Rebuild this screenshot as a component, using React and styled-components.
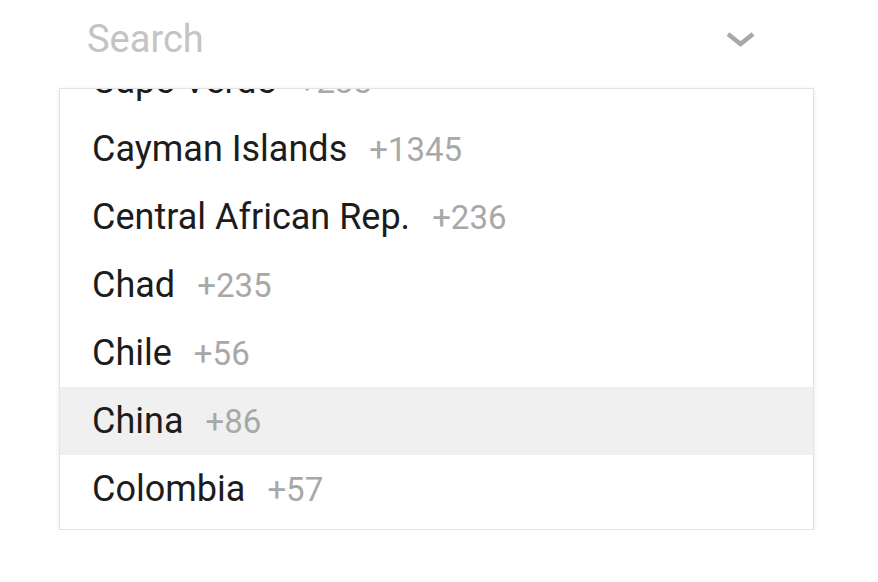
import React, {useLayoutEffect, useRef} from 'react';
import styled, {createGlobalStyle} from 'styled-components';

const GlobalStyle = createGlobalStyle`
  body {
    margin: 0;
    background: #fff;
    font-family: Roboto, "Liberation Sans", Arial, sans-serif;
  }
`;

const countries = [
  {name: 'Cambodia', code: '+855'},
  {name: 'Cameroon', code: '+237'},
  {name: 'Canada', code: '+1'},
  {name: 'Cape Verde', code: '+238'},
  {name: 'Cayman Islands', code: '+1345'},
  {name: 'Central African Rep.', code: '+236'},
  {name: 'Chad', code: '+235'},
  {name: 'Chile', code: '+56'},
  {name: 'China', code: '+86', active: true},
  {name: 'Colombia', code: '+57'},
  {name: 'Comoros', code: '+269'},
  {name: 'Congo', code: '+242'},
];

const Wrapper = styled.div`
  width: 755px;
  margin-left: 59px;
`;

const Field = styled.div`
  display: flex;
  align-items: center;
  justify-content: space-between;
  height: 78px;
  padding: 0 58px 0 28px;
  margin-bottom: 10px;
`;

const Placeholder = styled.span`
  font-size: 38px;
  color: #c4c4c4;
`;

const Menu = styled.ul`
  list-style: none;
  margin: 0;
  padding: 0;
  height: 440px;
  overflow-y: auto;
  border: 1px solid #e3e3e3;
  box-shadow: 0 1px 4px rgba(0, 0, 0, 0.1);
  scrollbar-width: none;

  &::-webkit-scrollbar {
    display: none;
  }
`;

const Spacer = styled.li`
  height: 8px;
`;

const Option = styled.li`
  height: 68px;
  line-height: 68px;
  padding: 0 32px;
  white-space: nowrap;
  background: ${({active}) => (active ? '#f0f0f0' : '#fff')};
`;

const Name = styled.span`
  font-size: 36px;
  color: #1c1c1c;
`;

const Code = styled.span`
  margin-left: 22px;
  font-size: 33px;
  color: #a8a8a8;
`;

const Chevron = () => (
  <svg width="31" height="18" viewBox="0 0 31 18">
    <polyline
      points="3,4 15.5,14 28,4"
      fill="none"
      stroke="#a8a8a8"
      strokeWidth="4.5"
    />
  </svg>
);

const App = () => {
  const menuRef = useRef (null);

  useLayoutEffect (() => {
    if (menuRef.current) menuRef.current.scrollTop = 254;
  }, []);

  return (
    <Wrapper>
      <GlobalStyle />
      <Field>
        <Placeholder>Search</Placeholder>
        <Chevron />
      </Field>
      <Menu ref={menuRef}>
        <Spacer />
        {countries.map (c => (
          <Option key={c.name} active={c.active}>
            <Name>{c.name}</Name>
            <Code>{c.code}</Code>
          </Option>
        ))}
        <Spacer />
      </Menu>
    </Wrapper>
  );
};

export default App;
